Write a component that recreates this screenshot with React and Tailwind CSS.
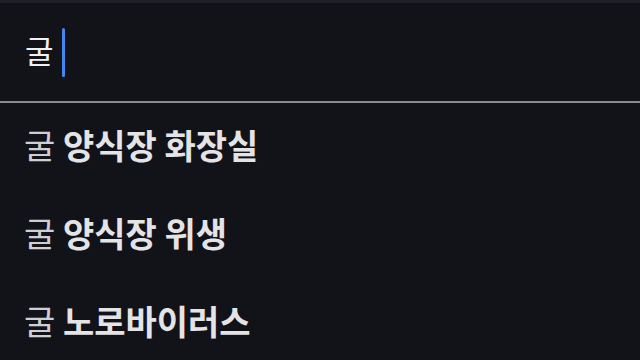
import React from 'react';

const SUGGESTIONS = ['양식장 화장실', '양식장 위생', '노로바이러스'];

const font = { fontFamily: '"Noto Sans CJK KR", "Noto Sans", sans-serif' };

const App = () => {
  return (
    <div className="w-[640px] h-[360px] overflow-hidden bg-[#121319] flex flex-col" style={font}>
      {/* top edge */}
      <div className="h-[3px] shrink-0 bg-[#1f2027]" />

      {/* search input */}
      <div className="h-[98px] shrink-0 flex items-center pl-[25px]">
        <span className="text-[31px] leading-none text-[#f0f0f2] pb-[5px]">굴</span>
        <span className="ml-[8px] w-[3px] h-[49px] rounded-full bg-[#4187ee]" />
      </div>
      <div className="h-[2px] shrink-0 bg-[#8a8a8f]" />

      {/* suggestions */}
      <ul className="flex flex-col shrink-0">
        {SUGGESTIONS.map((s) => (
          <li key={s} className="h-[88px] shrink-0 flex items-center pl-[24px] pb-[4px] text-[34px] leading-none whitespace-pre">
            <span className="font-normal text-[#cfcfd3]">굴 </span>
            <span className="font-semibold text-[#e4e4e6]">{s}</span>
          </li>
        ))}
      </ul>
    </div>
  );
};

export default App;
